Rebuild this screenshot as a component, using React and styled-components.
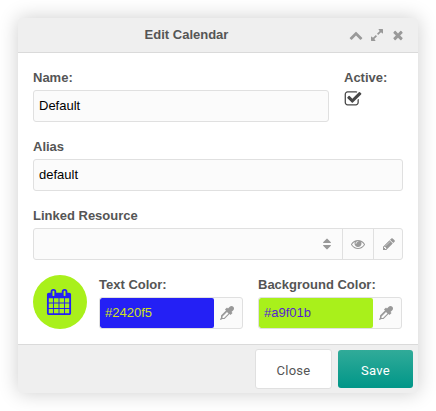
import React from "react";
import styled, { createGlobalStyle } from "styled-components";

const GlobalStyle = createGlobalStyle`
  * { box-sizing: border-box; }
  body { margin: 0; background: #fff; font-family: "Liberation Sans", Arial, sans-serif; font-size: 13px; }
`;

const PATHS = {
  up: "M1683 1331l-166 165q-19 19-45 19t-45-19l-531-531-531 531q-19 19-45 19t-45-19l-166-165q-19-19-19-45.5t19-45.5l742-741q19-19 45-19t45 19l742 741q19 19 19 45.5t-19 45.5z",
  expand: "M883 1056q0 13-10 23l-332 332 144 144q19 19 19 45t-19 45-45 19h-448q-26 0-45-19t-19-45v-448q0-26 19-45t45-19 45 19l144 144 332-332q10-10 23-10t23 10l114 114q10 10 10 23zm781-864v448q0 26-19 45t-45 19-45-19l-144-144-332 332q-10 10-23 10t-23-10l-114-114q-10-10-10-23t10-23l332-332-144-144q-19-19-19-45t19-45 45-19h448q26 0 45 19t19 45z",
  close: "M1490 1322q0 40-28 68l-136 136q-28 28-68 28t-68-28l-294-294-294 294q-28 28-68 28t-68-28l-136-136q-28-28-28-68t28-68l294-294-294-294q-28-28-28-68t28-68l136-136q28-28 68-28t68 28l294 294 294-294q28-28 68-28t68 28l136 136q28 28 28 68t-28 68l-294 294 294 294q28 28 28 68z",
  check: "M1472 930v318q0 119-84.5 203.5t-203.5 84.5h-832q-119 0-203.5-84.5t-84.5-203.5v-832q0-119 84.5-203.5t203.5-84.5h832q63 0 117 25 15 7 18 23 3 17-9 29l-49 49q-10 10-23 10-3 0-9-2-23-6-45-6h-832q-66 0-113 47t-47 113v832q0 66 47 113t113 47h832q66 0 113-47t47-113v-254q0-13 9-22l64-64q10-10 23-10 6 0 12 3 20 8 20 29zm231-489l-814 814q-24 24-57 24t-57-24l-430-430q-24-24-24-57t24-57l110-110q24-24 57-24t57 24l263 263 647-647q24-24 57-24t57 24l110 110q24 24 24 57t-24 57z",
  sort: "M1408 1088q0 26-19 45l-448 448q-19 19-45 19t-45-19l-448-448q-19-19-19-45t19-45 45-19h896q26 0 45 19t19 45zm0-384q0 26-19 45t-45 19h-896q-26 0-45-19t-19-45 19-45l448-448q19-19 45-19t45 19l448 448q19 19 19 45z",
  eye: "M1664 960q-152-236-381-353 61 104 61 225 0 185-131.5 316.5t-316.5 131.5-316.5-131.5-131.5-316.5q0-121 61-225-229 117-381 353 133 205 333.5 326.5t434.5 121.5 434.5-121.5 333.5-326.5zm-720-384q0-20-14-34t-34-14q-125 0-214.5 89.5t-89.5 214.5q0 20 14 34t34 14 34-14 14-34q0-86 61-147t147-61q20 0 34-14t14-34zm848 384q0 34-20 69-140 230-376.5 368.5t-499.5 138.5-499.5-139-376.5-368q-20-35-20-69t20-69q140-229 376.5-368t499.5-139 499.5 139 376.5 368q20 35 20 69z",
  pencil: "M491 1536l91-91-235-235-91 91v107h128v128h107zm523-928q0-22-22-22-10 0-17 7l-542 542q-7 7-7 17 0 22 22 22 10 0 17-7l542-542q7-7 7-17zm-54-192l416 416-832 832h-416v-416zm683 96q0 53-37 90l-166 166-416-416 166-165q36-38 90-38 53 0 91 38l235 234q37 39 37 91z",
  calendar: "M192 1664h288v-288h-288v288zm352 0h320v-288h-320v288zm-352-352h288v-320h-288v320zm352 0h320v-320h-320v320zm-352-384h288v-288h-288v288zm736 736h320v-288h-320v288zm-384-736h320v-288h-320v288zm768 736h288v-288h-288v288zm-384-352h320v-320h-320v320zm-352-864v-288q0-13-9.5-22.5t-22.5-9.5h-64q-13 0-22.5 9.5t-9.5 22.5v288q0 13 9.5 22.5t22.5 9.5h64q13 0 22.5-9.5t9.5-22.5zm736 864h288v-320h-288v320zm-384-384h320v-288h-320v288zm384 0h288v-288h-288v288zm32-480v-288q0-13-9.5-22.5t-22.5-9.5h-64q-13 0-22.5 9.5t-9.5 22.5v288q0 13 9.5 22.5t22.5 9.5h64q13 0 22.5-9.5t9.5-22.5zm384-64v1280q0 52-38 90t-90 38h-1408q-52 0-90-38t-38-90v-1280q0-52 38-90t90-38h128v-96q0-66 47-113t113-47h64q66 0 113 47t47 113v96h384v-96q0-66 47-113t113-47h64q66 0 113 47t47 113v96h128q52 0 90 38t38 90z",
  dropper: "M1698 94q94 94 94 226.5t-94 225.5l-225 223 104 104q10 10 10 23t-10 23l-210 210q-10 10-23 10t-23-10l-105-105-603 603q-37 37-90 37h-203l-256 128-64-64 128-256v-203q0-53 37-90l603-603-105-105q-10-10-10-23t10-23l210-210q10-10 23-10t23 10l104 104 223-225q93-94 225.5-94t226.5 94zm-1186 1442l576-576-192-192-576 576v192h192z",
};

const Svg = styled.svg`
  display: block;
  flex: none;
  width: ${(p) => p.$size}px;
  height: ${(p) => p.$size}px;
  fill: currentColor;
`;

const Icon = ({ name, size = 14 }) => (
  <Svg $size={size} viewBox="0 0 1792 1792" aria-hidden="true">
    <path d={PATHS[name]} />
  </Svg>
);

const Page = styled.div`
  height: 411px;
  padding: 18px;
  overflow: hidden;
`;

const Dialog = styled.section`
  width: 400px;
  height: 375px;
  display: flex;
  flex-direction: column;
  background: #fff;
  border-radius: 2px;
  box-shadow: 0 0 20px rgba(0, 0, 0, 0.2);
  overflow: hidden;
`;

const Header = styled.header`
  height: 35px;
  display: grid;
  grid-template-columns: 1fr auto;
  align-items: center;
  padding: 0 13px 0 16px;
  background: #efefef;
  border-bottom: 1px solid #dadada;
`;

const Title = styled.h1`
  margin: 0;
  padding: 0 10px 1px 0;
  font-size: 13px;
  line-height: 16px;
  text-align: center;
  color: #555;
`;

const WindowTools = styled.div`
  display: flex;
  gap: 7px;
  color: #999;
`;

const Body = styled.div`
  flex: 1;
  padding: 17px 15px 0;
`;

const FieldRow = styled.div`
  display: flex;
  gap: 15px;
  height: 69px;
`;

const Field = styled.div`
  width: ${(p) => p.$width || 370}px;
`;

const Label = styled.label`
  display: block;
  height: 20px;
  line-height: 16px;
  font-weight: bold;
  color: #555;
  white-space: nowrap;
`;

const Control = styled.div`
  display: flex;
  height: 32px;
  border: 1px solid #e0e0e0;
  border-radius: 3px;
  background: #fbfbfb;
  overflow: hidden;
`;

const TextInput = styled.input`
  flex: 1;
  min-width: 0;
  height: 30px;
  padding: 0 5px 1px;
  border: 0;
  outline: 0;
  background: transparent;
  color: #000;
  font: 13px "Liberation Sans", Arial, sans-serif;
`;

const ColorInput = styled(TextInput)`
  border-radius: 2px;
  background: ${(p) => p.$bg};
  color: ${(p) => p.$fg};
`;

const Addon = styled.span`
  width: ${(p) => p.$width}px;
  display: flex;
  align-items: center;
  justify-content: center;
  color: #999;
  border-left: ${(p) => (p.$divided ? "1px solid #e0e0e0" : "0")};
`;

const PencilAddon = styled(Addon)`
  padding-left: 2px;
`;

const DropperAddon = styled(Addon)`
  padding-right: 2px;
`;

const Checkbox = styled.div`
  width: 18px;
  height: 16px;
  color: #484848;
`;

const ColorRow = styled.div`
  display: flex;
`;

const Badge = styled.div`
  width: 54px;
  height: 54px;
  margin: -2px 12px 0 0;
  padding-right: 2px;
  display: flex;
  align-items: center;
  justify-content: center;
  border-radius: 50%;
  background: #a9f01b;
  color: #2420f5;
`;

const ColorField = styled(Field)`
  margin-right: 15px;
`;

const Footer = styled.footer`
  height: 49px;
  display: flex;
  align-items: center;
  justify-content: flex-end;
  gap: 6px;
  padding-right: 5px;
  background: #efefef;
  border-top: 1px solid #dadada;
`;

const Button = styled.button`
  width: ${(p) => (p.$primary ? 75 : 77)}px;
  height: ${(p) => (p.$primary ? 38 : 40)}px;
  padding: 3px 0 0;
  border: ${(p) => (p.$primary ? "0" : "1px solid #e0e0e0")};
  border-radius: 3px;
  background: ${(p) => (p.$primary ? "linear-gradient(#31ab99, #009688)" : "#fff")};
  color: ${(p) => (p.$primary ? "#fff" : "#555")};
  font: 13px Roboto, sans-serif;
  letter-spacing: 0.3px;
`;

export default function App() {
  return (
    <Page>
      <GlobalStyle />
      <Dialog>
        <Header>
          <Title>Edit Calendar</Title>
          <WindowTools>
            <Icon name="up" />
            <Icon name="expand" />
            <Icon name="close" />
          </WindowTools>
        </Header>
        <Body>
          <FieldRow>
            <Field $width={296}>
              <Label>Name:</Label>
              <Control><TextInput defaultValue="Default" /></Control>
            </Field>
            <Field $width={59}>
              <Label>Active:</Label>
              <Checkbox role="checkbox" aria-checked="true"><Icon name="check" size={18} /></Checkbox>
            </Field>
          </FieldRow>
          <FieldRow>
            <Field>
              <Label>Alias</Label>
              <Control><TextInput defaultValue="default" /></Control>
            </Field>
          </FieldRow>
          <FieldRow>
            <Field>
              <Label>Linked Resource</Label>
              <Control>
                <TextInput />
                <Addon $width={30}><Icon name="sort" /></Addon>
                <Addon $width={31} $divided><Icon name="eye" /></Addon>
                <PencilAddon $width={29} $divided><Icon name="pencil" /></PencilAddon>
              </Control>
            </Field>
          </FieldRow>
          <ColorRow>
            <Badge><Icon name="calendar" size={26} /></Badge>
            <ColorField $width={144}>
              <Label>Text Color:</Label>
              <Control>
                <ColorInput defaultValue="#2420f5" $bg="#2420f5" $fg="#d0e01b" />
                <DropperAddon $width={28}><Icon name="dropper" /></DropperAddon>
              </Control>
            </ColorField>
            <Field $width={144}>
              <Label>Background Color:</Label>
              <Control>
                <ColorInput defaultValue="#a9f01b" $bg="#a9f01b" $fg="#561fd0" />
                <DropperAddon $width={28}><Icon name="dropper" /></DropperAddon>
              </Control>
            </Field>
          </ColorRow>
        </Body>
        <Footer>
          <Button>Close</Button>
          <Button $primary>Save</Button>
        </Footer>
      </Dialog>
    </Page>
  );
}
